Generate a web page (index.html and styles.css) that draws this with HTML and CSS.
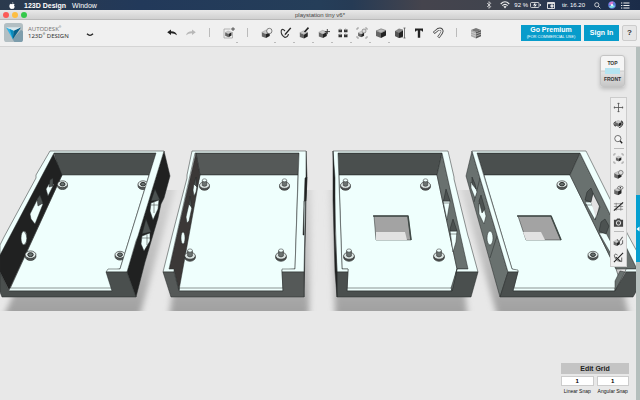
FILE: index.html
```
<!DOCTYPE html>
<html lang="en">
<head>
    <meta charset="UTF-8">
    <meta name="viewport" content="width=device-width, initial-scale=1.0">
    <title>playstation tiny v6*</title>
    <link rel="stylesheet" href="styles.css">
</head>
<body>
    <!-- shared symbols -->
    <svg class="symbols" aria-hidden="true">
        <symbol id="cube" viewBox="0 0 12 12">
            <path d="M1 4.5 6 6.5V11.5L1 9.5Z" fill="#666"/>
            <path d="M6 6.5 10.5 4V9L6 11.5Z" fill="#222"/>
            <path d="M1 4.5 5.5 2.2 10.5 4 6 6.5Z" fill="#ccc" stroke="#777" stroke-width=".4"/>
        </symbol>
        <symbol id="corners" viewBox="0 0 12 12">
            <path d="M1 3V1H3M9 1H11V3M11 9V11H9M3 11H1V9" fill="none" stroke="#888" stroke-width=".8"/>
        </symbol>
        <symbol id="ring" viewBox="0 0 12 10">
            <ellipse cx="6" cy="5.8" rx="5" ry="3.8" fill="#555b5a" stroke="#222" stroke-width=".6"/>
            <ellipse cx="6" cy="4.2" rx="5" ry="3.4" fill="#e4eeec" stroke="#222" stroke-width=".6"/>
            <ellipse cx="6" cy="4.2" rx="2.5" ry="1.8" fill="#687270" stroke="#111" stroke-width=".8"/>
        </symbol>
        <symbol id="screw" viewBox="0 0 12 14">
            <ellipse cx="6" cy="9.6" rx="5" ry="3.7" fill="#4d5251" stroke="#222" stroke-width=".6"/>
            <ellipse cx="6" cy="8.2" rx="5" ry="3.2" fill="#dce6e4" stroke="#222" stroke-width=".6"/>
            <path d="M3.8 3.5V8.5Q6 10.2 8.2 8.5V3.5Z" fill="#6b7371" stroke="#222" stroke-width=".5"/>
            <ellipse cx="6" cy="3.3" rx="2.2" ry="1.5" fill="#f0fffd" stroke="#333" stroke-width=".5"/>
        </symbol>
    </svg>

    <header class="menubar">
        <svg class="apple" viewBox="0 0 14 16"><path d="M10 0Q10 3 7 4Q7 1 10 0ZM7 5Q9 4 10 4Q12 4 13 6Q10 8 13.5 11Q12 16 9.5 16Q7 15 5 16Q2 16 .8 11Q0 5 4 4Q5 4 7 5Z" fill="#fff"/></svg>
        <strong>123D Design</strong>
        <span class="menu-item">Window</span>
        <div class="status">
            <svg class="bluetooth" viewBox="0 0 6 9"><path d="M.8 2.3 5 6.3 3 8.3V.7L5 2.7.8 6.7" fill="none" stroke="#eee" stroke-width=".8"/></svg>
            <svg class="wifi" viewBox="0 0 10 8"><path d="M.7 3Q5-1.5 9.3 3M2.3 4.7Q5 2 7.7 4.7" fill="none" stroke="#eee" stroke-width="1.1"/><path d="M3.4 5.6Q5 4.4 6.6 5.6L5 7.5Z" fill="#eee"/></svg>
            <span class="battery-text">92 %</span>
            <svg class="battery" viewBox="0 0 11 6"><rect x=".5" y=".5" width="8.5" height="5" rx="1" fill="none" stroke="#eee" stroke-width=".8"/><path d="M5.6 0 3 3.4H5L4 6 7 2.6H5Z" fill="#fff"/><path d="M10.3 2V4" stroke="#eee"/></svg>
            <svg class="calendar" viewBox="0 0 8 7"><path d="M.5.5H7.5V6.5H.5Z" fill="none" stroke="#eee" stroke-width=".9"/><path d="M1 1.6H7M4 3H6V5H4Z" fill="#bbb" stroke="#eee"/></svg>
            <span class="clock">tir. 16.20</span>
            <svg class="search" viewBox="0 0 8 8"><circle cx="3.2" cy="3.2" r="2.4" fill="none" stroke="#eee" stroke-width=".9"/><path d="M5 5 7.3 7.3" stroke="#eee"/></svg>
            <svg class="siri" viewBox="0 0 8 8"><circle cx="4" cy="4" r="3.8" fill="#5a7bd8"/><path d="M.7 3.5Q3-.5 5.5 1L4 4Z" fill="#dc77ce"/><path d="M1 5.7 4 3.7 7.2 5Q4 8.8 1 5.7Z" fill="#7fe2e6"/><circle cx="4" cy="4" r="1" fill="#fff"/></svg>
            <svg class="list" viewBox="0 0 9 7"><path d="M0 1H1.3M2.4 1H8.5M0 3.5H1.3M2.4 3.5H8.5M0 6H1.3M2.4 6H8.5" stroke="#eee"/></svg>
        </div>
    </header>

    <div class="titlebar">
        <div class="lights"><i class="red"></i><i class="yellow"></i><i class="green"></i></div>
        <span>playstation tiny v6*</span>
    </div>

    <nav class="toolbar">
        <svg class="logo" viewBox="0 0 20 20">
            <rect width="20" height="20" rx="3" fill="#b3bfc3"/>
            <path d="M9 17 18 7 20 9V17Q20 20 17 20H11Z" fill="#7d9dac"/>
            <path d="M2 4.5 10 8.2 9.3 17Z" fill="#33b4e5"/>
            <path d="M18 4.5 10 8.2 9.3 17Z" fill="#07618a"/>
            <path d="M2 4.5H18L10 8.2Z" fill="#d7e7ed"/>
            <path d="M6 6.3 10 8.2 9.3 17Z" fill="#078bbd"/>
        </svg>
        <div class="brand"><span>AUTODESK<sup>®</sup></span><span class="product">123D<sup>®</sup> DESIGN</span></div>
        <button class="app-menu" aria-label="Application menu"><svg viewBox="0 0 8 4"><path d="M1 .8 Q4 4 7 .8" fill="none" stroke="#222" stroke-width="1.3"/></svg></button>

        <div class="tools">
            <button aria-label="Undo"><svg viewBox="0 0 12 12"><path d="M1.2 5.2 5 2.4V4.3Q10 4.3 11 8.2Q8.3 6.2 5 6.3V8Z" fill="#222"/></svg></button>
            <button aria-label="Redo"><svg viewBox="0 0 12 12"><path d="M10.8 5.2 7 2.4V4.3Q2 4.3 1 8.2Q3.7 6.2 7 6.3V8Z" fill="#b8b8b8"/></svg></button>
            <i class="divider"></i>
            <button class="more" aria-label="Transform"><svg viewBox="0 0 12 12"><path d="M7.5 2H1V11H9.5V5" fill="none" stroke="#999" stroke-width=".7"/><use href="#cube" x="1.5" y="2.5" width="8" height="8"/><path d="M10 .2V4M8 2H12" stroke="#333" stroke-width=".8"/></svg></button>
            <i class="divider"></i>
            <button class="more" aria-label="Primitives"><svg viewBox="0 0 12 12"><use href="#cube" x="0" y="1.5" width="10" height="10"/><circle cx="8.3" cy="4" r="2.7" fill="#eee" stroke="#555" stroke-width=".7"/></svg></button>
            <button class="more" aria-label="Sketch"><svg viewBox="0 0 12 12"><path d="M5 4Q2 .8 1.2 4Q.8 8 5 10.5Q8 10 8.5 7" fill="none" stroke="#333" stroke-width="1.1"/><path d="M11.3 1.2 6 7.5 4.5 8.5 5 6.5 10.2.5Z" fill="#222"/></svg></button>
            <button class="more" aria-label="Construct"><svg viewBox="0 0 12 12"><use href="#cube" x="0" y="2" width="10" height="10"/><path d="M5.5 5 9.5.6" stroke="#222" stroke-width="1.6"/></svg></button>
            <button class="more" aria-label="Modify"><svg viewBox="0 0 12 12"><use href="#cube" x="0" y="1.5" width="10" height="10"/><path d="M9.3 2V7.2M6.8 4.6H12" stroke="#333" stroke-width=".9"/></svg></button>
            <button class="more" aria-label="Pattern"><svg viewBox="0 0 12 12"><path d="M1.5 2.5H5V5.3H1.5ZM7 2.5H10.5V5.3H7ZM1.5 7.3H5V10.3H1.5ZM7 7.3H10.5V10.3H7Z" fill="#333"/><path d="M1.5 2.5 3 1.5 5 2.5 3.3 3.5ZM7 2.5 8.5 1.5 10.5 2.5 8.8 3.5ZM1.5 7.3 3 6.5 5 7.3 3.3 8.3ZM7 7.3 8.5 6.5 10.5 7.3 8.8 8.3Z" fill="#999"/></svg></button>
            <button class="more" aria-label="Grouping"><svg viewBox="0 0 12 12"><use href="#corners" width="12" height="12"/><use href="#cube" x="1.5" y="3" width="7.5" height="7.5"/><circle cx="8" cy="4" r="2" fill="#ddd" stroke="#666" stroke-width=".6"/></svg></button>
            <button class="more" aria-label="Combine"><svg viewBox="0 0 12 12"><path d="M1 4 6 6V11L1 9Z" fill="#666"/><path d="M6 6 11 3.5V8.5L6 11Z" fill="#222"/><path d="M1 4 6 1.8 11 3.5 6 6Z" fill="#bbb" stroke="#555" stroke-width=".5"/></svg></button>
            <button aria-label="Measure"><svg viewBox="0 0 12 12"><path d="M1 4 5 1.5 9 2.5V10.5L5 11 1 9Z" fill="#888"/><path d="M1 4 5 6V11L1 9Z" fill="#555"/><path d="M5 6 9 3.5V9.5L5 11Z" fill="#222"/><path d="M10.5 1V11M9.5 1H11.5M9.5 11H11.5" stroke="#555" stroke-width=".8"/></svg></button>
            <button aria-label="Text"><svg viewBox="0 0 12 12"><path d="M2 1.5H10V4.4H9.2L8.4 3.5H7.2V10.8H4.8V3.5H3.6L2.8 4.4H2Z" fill="#222"/></svg></button>
            <button aria-label="Snap"><svg viewBox="0 0 12 12"><path d="M1.8 6 6 2.4Q9.5 1 10.2 4Q10.5 5.5 6.3 10.3" fill="none" stroke="#444" stroke-width="2.8"/><path d="M2.3 5.6 6 2.6Q9.3 1.5 10 4Q10 5.5 6.6 10" fill="none" stroke="#eee" stroke-width="1.3"/></svg></button>
            <i class="divider"></i>
            <button aria-label="Material"><svg viewBox="0 0 12 12"><path d="M1 3V9.3L6 11.5V5Z" fill="#aaa"/><path d="M11 3V9.3L6 11.5V5Z" fill="#555"/><path d="M1 3 6 1 11 3 6 5Z" fill="#777"/><path d="M1 5 6 7 11 5M1 7.2 6 9.2 11 7.2" fill="none" stroke="#ddd" stroke-width=".6"/></svg></button>
        </div>

        <div class="account">
            <button class="blue premium">Go Premium<small>(FOR COMMERCIAL USE)</small></button>
            <button class="blue">Sign In</button>
            <button class="help">?</button>
        </div>
    </nav>

    <main class="workspace">
        <svg class="scene" viewBox="0 47 640 353" preserveAspectRatio="xMidYMid slice" role="img" aria-label="Four open enclosures">
            <defs>
                <filter id="soft" x="-10%" y="-10%" width="120%" height="120%"><feGaussianBlur stdDeviation="3 .7"/></filter>
                <linearGradient id="fade" x1="0" y1="0" x2="0" y2="1"><stop offset="0" stop-color="#d3d3d3"/><stop offset=".6" stop-color="#bcbcbc"/><stop offset="1" stop-color="#a1a1a1"/></linearGradient>
            </defs>

            <!-- shadows -->
            <g filter="url(#soft)" fill="url(#fade)">
                <path d="M60 190H175L141 311H6Z"/>
                <path d="M185 190H311L309 311H170Z"/>
                <path d="M330 190H455L467 311H335Z"/>
                <path d="M461 190H600L628 311H496Z"/>
            </g>

            <!-- box 1 -->
            <g class="part">
                <path class="black" d="M164 151 170 176 164 198 161 204 158 218 145 262 136 297 127 272Z"/>
                <path class="face" d="M54 153H157L149 176H61Z"/>
                <path class="floor" d="M62 175H149L120 269 107 271 113 291H9Z"/>
                <path class="floor" d="M9 288H112L113 291H9"/>
                <path class="black" d="M53 153 62 175 9 290 0 272V250Z"/>
                <path class="floor" d="M46 189 49 184 54 184 48 196Z"/>
                <path class="hole" d="M50 180 53 178V186L49 187Z"/>
                <path class="floor" d="M30 214 37 200 43 204 35 224 31 219Z"/>
                <path class="hole" d="M37 199 40 195 43 203 38 206Z"/>
                <ellipse class="floor" cx="24" cy="238" rx="3" ry="7"/>
                <path class="edge" d="M24 231Q30 239 24 245"/>
                <use href="#ring" x="56" y="180" width="13" height="10"/>
                <use href="#ring" x="137" y="180" width="12" height="10"/>
                <use href="#ring" x="24" y="250" width="13" height="11"/>
                <use href="#ring" x="114" y="250" width="12" height="11"/>
                <path class="rim" d="M50 151H164L138 236 136 241 127 272H106L108 269H120L156 153H54L0 255V245L4 237 36 178V175Z"/>
                <path class="face" d="M0 272 9 291H112L106 272H127L136 297H2L0 292Z"/>
                <path class="hole" d="M155 189 160 200 151 201ZM146 219 151 232 142 234Z"/>
                <path class="floor" d="M151 203 159 200 158 209 153 220 150 211Z"/>
                <path class="floor" d="M142 236 150 233V241L144 251 141 244Z"/>
                <path class="edge" d="M151 205H158M142 238H150M154 202V213M147 235V245"/>
            </g>

            <!-- box 2 -->
            <g class="part">
                <path class="black" d="M306 151 307 176 306 201 304 297 302 272Z"/>
                <path class="face light" d="M196 153H299L298 175H200Z"/>
                <path class="floor" d="M200 175H298L295 269 282 270 283 291H179L174 270Z"/>
                <path class="floor" d="M179 288H283V291H179Z"/>
                <path class="brown" d="M196 153 200 175 179 290 174 270H169Z"/>
                <path class="floor" d="M193 190 194 184 197 186 196 192 194 196Z"/>
                <path class="hole" d="M194 184 196 177 197 187Z"/>
                <path class="floor" d="M186 217 189 204 192 207 189 221 187 223Z"/>
                <path class="hole" d="M189 204 190 196 192 208Z"/>
                <ellipse class="floor" cx="183" cy="238" rx="2" ry="6"/>
                <use href="#screw" x="198" y="177" width="13" height="14"/>
                <use href="#screw" x="278" y="177" width="13" height="14"/>
                <use href="#screw" x="183" y="247" width="14" height="15"/>
                <use href="#screw" x="274" y="247" width="14" height="15"/>
                <path class="rim" d="M192 151H306V176L304 272H282V269H295L299 153H195L169 269H174V272H163L172 236 187 178V175Z"/>
                <path class="face light" d="M163 272H174L179 291H283L282 272H304V297H171Z"/>
                <path class="black" d="M305 178 307 177 306 201H304V235H303Z"/>
            </g>

            <!-- box 3 -->
            <g class="part">
                <path class="face" d="M338 153H442L437 175H339Z"/>
                <path class="floor" d="M339 175H437L457 269 452 291H347L348 269H342Z"/>
                <path class="floor" d="M347 288H452L451 291H347Z"/>
                <path class="gray" d="M442 153 469 269H457L437 175Z"/>
                <path class="floor" d="M443 201H450L448 213 447 220Z"/>
                <path class="hole" d="M444 199 446 189 450 201H443Z"/>
                <path class="floor" d="M450 231H457L456 242 453 252Z"/>
                <path class="hole" d="M450 229 453 219 457 231H450Z"/>
                <path class="edge" d="M443 203H449M450 234H457"/>
                <path class="cut" d="M374 216H408L411 240H376Z"/>
                <path class="cut-light" d="M376 232H405L407 240H376Z"/>
                <path class="thick" d="M373 216H408L411 240"/>
                <use href="#screw" x="339" y="177" width="13" height="14"/>
                <use href="#screw" x="419" y="177" width="13" height="14"/>
                <use href="#screw" x="342" y="247" width="14" height="15"/>
                <use href="#screw" x="432" y="247" width="14" height="15"/>
                <path class="rim" d="M333 151H448L454 177V179L468 236 469 239 478 272H456L457 269H468L442 153H338L342 269H348V272H337Z"/>
                <path class="face" d="M337 272H348L347 291H452L456 272H478L471 297H337Z"/>
                <path class="gray" d="M457 269 456 275 452 291 451 288Z"/>
                <path class="black" d="M333 151 335 178V234L337 272V297L335 272 333 200Z"/>
            </g>

            <!-- box 4 -->
            <g class="part">
                <path class="gray" d="M472 151 466 176 500 297 508 272Z"/>
                <path class="edge" d="M497 236 490 258M480 178 474 202"/>
                <path class="face" d="M477 153H580L570 175H484Z"/>
                <path class="floor" d="M484 175H570L616 269 619 278 615 291H513L518 271 512 269Z"/>
                <path class="floor" d="M513 288H615V291H513Z"/>
                <path class="gray" d="M580 153 637 269H616L570 175Z"/>
                <path class="floor" d="M585 202H591L597 214 595 220Z"/>
                <path class="cut-light" d="M591 202 593 194 599 206 596 218Z"/>
                <path class="hole" d="M585 200 587 192 591 188 593 193 591 202Z"/>
                <path class="edge" d="M593 193 600 207 595 220M585 205H592"/>
                <path class="floor" d="M599 233H606L614 248 611 254Z"/>
                <path class="hole" d="M599 231 601 222 605 219 609 226 606 234Z"/>
                <path class="cut" d="M518 216H551L561 240H526Z"/>
                <path class="cut-light" d="M523 232H541L545 240H526Z"/>
                <path class="thick" d="M517 216H551L561 240"/>
                <use href="#ring" x="556" y="180" width="12" height="10"/>
                <use href="#ring" x="587" y="250" width="12" height="11"/>
                <path class="rim" d="M472 151H586L598 175 600 179 628 235 640 257V272H625L626 269H637L580 153H477L512 269 518 270V272H508Z"/>
                <path class="gray" d="M625 272 615 291V281L620 271Z"/>
                <path class="floor" d="M471 182 475 186 477 192 475 198 471 188Z"/>
                <path class="hole" d="M472 177 475 184 476 189 472 184Z"/>
                <path class="floor" d="M479 203 484 208 486 216 484 224 479 214Z"/>
                <path class="hole" d="M479 201 481 195 485 209 482 213Z"/>
                <ellipse class="floor" cx="490" cy="238" rx="3" ry="7"/>
                <path class="face" d="M508 272H518L513 291H615L626 272H640V285L633 297H500Z"/>
            </g>
        </svg>

        <div class="view-cube">
            <button>TOP</button>
            <i></i>
            <button>FRONT</button>
        </div>

        <div class="palette">
            <button aria-label="Pan"><svg viewBox="0 0 12 12"><path d="M6 1V11M1 6H11M5 2.2 6 1 7 2.2M5 9.8 6 11 7 9.8M2.2 5 1 6 2.2 7M9.8 5 11 6 9.8 7" fill="none" stroke="#555" stroke-width=".9"/></svg></button>
            <button aria-label="Orbit"><svg viewBox="0 0 12 12"><use href="#cube" x="1.5" y="1" width="9" height="9"/><path d="M3 9Q-1 6 3 4M9 3Q13 6 8 10L6.5 10.5" fill="none" stroke="#333" stroke-width="1.1"/></svg></button>
            <button aria-label="Zoom"><svg viewBox="0 0 12 12"><circle cx="5.3" cy="5" r="3.4" fill="#f5f5f5" stroke="#555" stroke-width=".9"/><path d="M7.8 7.5 10 10" stroke="#222" stroke-width="1.6"/></svg></button>
            <hr>
            <button aria-label="Fit"><svg viewBox="0 0 12 12"><use href="#corners" width="12" height="12"/><use href="#cube" x="2.5" y="2" width="7.5" height="7.5"/></svg></button>
            <button aria-label="Shading"><svg viewBox="0 0 12 12"><use href="#cube" x=".5" y="1" width="10" height="10"/><circle cx="8.5" cy="4" r="2.5" fill="#ddd" stroke="#555" stroke-width=".7"/></svg></button>
            <button aria-label="Visibility"><svg viewBox="0 0 12 12"><use href="#cube" x=".5" y="1.5" width="10" height="10"/><ellipse cx="8" cy="3" rx="3" ry="1.8" fill="#eee" stroke="#444" stroke-width=".7"/><circle cx="8" cy="3" r=".8" fill="#222"/></svg></button>
            <button aria-label="Grid visibility"><svg viewBox="0 0 12 12"><path d="M1 3H11M1 6H11M1 9H11M3.5 2V10.5M8.5 2V10.5" stroke="#777" stroke-width=".8"/><path d="M1 10.5 11 1.5" stroke="#222" stroke-width="1.2"/></svg></button>
            <button aria-label="Screenshot"><svg viewBox="0 0 12 12"><path d="M1 3H3.5L4.5 1.5H7.5L8.5 3H11V10.5H1Z" fill="#444"/><circle cx="6" cy="6.5" r="2.4" fill="#555" stroke="#eee"/></svg></button>
            <hr>
            <button aria-label="Snapping"><svg viewBox="0 0 12 12"><use href="#cube" x="0" y="2.5" width="8.5" height="9"/><path d="M10.5 1 6.5 6.5 4.5 3.5M8 10 10.5 8V4.5" fill="none" stroke="#666" stroke-width="1.1"/></svg></button>
            <button aria-label="Sketch visibility"><svg viewBox="0 0 12 12"><path d="M5 3.5Q2 1 1.5 4Q2 8 5 9.5L9.5 10.5V6" fill="none" stroke="#555" stroke-width="1"/><path d="M1 11 11 1M3 5.5 8 10" stroke="#222" stroke-width="1.2"/></svg></button>
        </div>

        <div class="grid-panel">
            <button class="edit-grid">Edit Grid</button>
            <div class="snap">
                <input type="text" id="linear" value="1">
                <label for="linear">Linear Snap</label>
            </div>
            <div class="snap">
                <input type="text" id="angular" value="1">
                <label for="angular">Angular Snap</label>
            </div>
        </div>

        <aside class="drawer"><button aria-label="Open parts library"><svg viewBox="0 0 4 6"><path d="M3.5.5V5.5L.5 3Z" fill="#fff"/></svg></button></aside>
    </main>
</body>
</html>
```

FILE: styles.css
```
* {
    box-sizing: border-box;
}
body {
    display: flex;
    flex-direction: column;
    height: 100vh;
    margin: 0;
    overflow: hidden;
    font-family: "Liberation Sans", Arial, sans-serif;
    font-size: 7px;
    color: #333;
    background-color: #e8e8e8;
}
button {
    padding: 0;
    border: none;
    background: none;
    font-family: inherit;
    color: inherit;
    cursor: pointer;
}
svg {
    display: block;
    flex: none;
}
.symbols {
    position: absolute;
    width: 0;
    height: 0;
}

/* system menu bar */
.menubar {
    display: flex;
    align-items: center;
    flex: none;
    height: 10px;
    padding: 0 10px 0 9px;
    color: #fff;
    background: linear-gradient(to right, #2b3a4d, #22395a 22%, #253e59 50%, #263b55 55%, #45444d 66%, #40444e 78%, #243450 87%, #1b2c49);
}
.apple {
    width: 6px;
    height: 7px;
    margin-right: 9px;
}
.menu-item {
    margin-left: 6px;
}
.status {
    display: flex;
    align-items: center;
    margin-left: auto;
}
.bluetooth {
    width: 6px;
    height: 8px;
    margin-right: 8px;
}
.wifi {
    width: 10px;
    height: 8px;
    margin-right: 4px;
}
.battery-text {
    font-size: 6px;
}
.battery {
    width: 11px;
    height: 6px;
    margin: 0 6px 0 2px;
}
.calendar {
    width: 8px;
    height: 7px;
    margin-right: 7px;
}
.clock {
    font-size: 6px;
}
.search {
    width: 7px;
    height: 7px;
    margin: 0 7px 0 9px;
}
.siri {
    width: 8px;
    height: 8px;
    margin-right: 5px;
}
.list {
    width: 9px;
    height: 7px;
}

/* window title */
.titlebar {
    display: flex;
    align-items: center;
    justify-content: center;
    position: relative;
    flex: none;
    height: 10px;
    border-bottom: 1px solid #b9b9b9;
    background: linear-gradient(#e8e8e8, #d0d0d0);
    font-size: 6px;
    color: #444;
}
.lights {
    display: flex;
    gap: 3px;
    position: absolute;
    left: 3px;
}
.lights i {
    width: 6px;
    height: 6px;
    border-radius: 50%;
}
.red {
    background-color: #fc5b57;
}
.yellow {
    background-color: #fdbe41;
}
.green {
    background-color: #35c84b;
}

/* toolbar */
.toolbar {
    display: flex;
    align-items: center;
    flex: none;
    height: 27px;
    padding: 0 3px 1px 4px;
    border-bottom: 1px solid #d4d4d4;
    background-color: #f0f0f0;
}
.logo {
    width: 19px;
    height: 19px;
}
.brand {
    display: flex;
    flex-direction: column;
    width: 58px;
    margin-left: 5px;
    font-family: "Noto Sans", "Open Sans", sans-serif;
    font-size: 6px;
    line-height: 7px;
    color: #777;
    white-space: nowrap;
}
.brand sup {
    font-size: 3px;
    line-height: 0;
}
.brand .product {
    color: #333;
}
.app-menu svg {
    width: 8px;
    height: 4px;
}
.app-menu {
    margin: 4px 68px 0 0;
}
.tools {
    display: flex;
    align-items: center;
}
.tools button,
.tools .divider {
    display: flex;
    justify-content: center;
    width: 19px;
}
.tools svg {
    width: 12px;
    height: 12px;
}
.divider::before {
    content: "";
    width: 1px;
    height: 9px;
    background-color: #bbb;
}
.more {
    position: relative;
}
.more::after {
    content: "";
    position: absolute;
    right: 0;
    bottom: -4px;
    width: 2px;
    height: 1px;
    background-color: #bbb;
}
.account {
    display: flex;
    gap: 3px;
    margin-left: auto;
}
.account button {
    height: 16px;
}
.blue {
    width: 35px;
    background-color: #079ccb;
    color: #fff;
    font-size: 7px;
    font-weight: bold;
}
.premium {
    display: flex;
    flex-direction: column;
    align-items: center;
    justify-content: center;
    width: 60px;
    line-height: 8px;
}
.premium small {
    font-size: 4px;
    font-weight: normal;
    line-height: 5px;
    white-space: nowrap;
}
.account .help {
    width: 15px;
    border: 1px solid #ccc;
    border-radius: 2px;
    background-color: #e6e6e6;
    font-size: 8px;
    font-weight: bold;
}

/* 3d view */
.workspace {
    position: relative;
    flex: 1;
    min-height: 0;
}
.scene {
    width: 100%;
    height: 100%;
}
.part path,
.part ellipse {
    stroke: #252928;
    stroke-width: .5;
    stroke-linejoin: round;
}
.part .floor,
.part .rim {
    fill: #effffd;
}
.part .face {
    fill: #4a4f4e;
}
.part .light {
    fill: #555958;
}
.part .gray {
    fill: #69716f;
}
.part .brown {
    fill: #3b3837;
}
.part .black {
    fill: #202121;
}
.part .hole {
    fill: #4c5251;
}
.part .cut {
    fill: #a3a3a3;
}
.part .cut-light {
    fill: #e2e2e2;
    stroke: none;
}
.part .edge {
    fill: none;
}
.part .thick {
    fill: none;
    stroke: #414a47;
    stroke-width: 1.6;
}

/* things over the view */
.view-cube {
    display: flex;
    flex-direction: column;
    align-items: center;
    justify-content: space-between;
    position: absolute;
    top: 8px;
    right: 15px;
    width: 25px;
    height: 32px;
    padding: 4px 0;
    border: 1px solid #c4c4c4;
    border-radius: 3px;
    background: linear-gradient(#f5f5f5 48%, #bbb 49%, #e3e3e3 53%, #c7c7c7);
    box-shadow: 0 2px 4px rgba(0, 0, 0, 0.2);
}
.view-cube button {
    font-size: 5px;
    font-weight: bold;
    line-height: 6px;
}
.view-cube i {
    width: 15px;
    height: 6px;
    background-color: #b5e4f1;
}
.palette {
    display: flex;
    flex-direction: column;
    align-items: center;
    position: absolute;
    top: 50px;
    right: 13px;
    width: 17px;
    padding: 1px 0;
    border: 1px solid #ccc;
    background-color: #efefef;
}
.palette button {
    display: flex;
    align-items: center;
    height: 16px;
}
.palette svg {
    width: 11px;
    height: 11px;
}
.palette hr {
    width: 10px;
    margin: 1px 0;
    border: none;
    border-top: 1px solid #bbb;
}
.grid-panel {
    display: grid;
    grid-template-columns: 1fr 1fr;
    gap: 2px 3px;
    position: absolute;
    right: 11px;
    bottom: 6px;
    width: 68px;
}
.edit-grid {
    grid-column: 1 / 3;
    height: 11px;
    background-color: #c4c4c4;
    font-size: 7px;
    font-weight: bold;
    color: #222;
}
.snap {
    display: flex;
    flex-direction: column;
    align-items: center;
    gap: 2px;
}
.snap input {
    width: 100%;
    height: 10px;
    padding: 0;
    border: 1px solid #ccc;
    background-color: #fff;
    font-family: inherit;
    font-size: 6px;
    font-weight: bold;
    text-align: center;
}
.snap label {
    font-size: 5px;
    line-height: 6px;
    color: #111;
    white-space: nowrap;
}
.drawer {
    display: flex;
    align-items: center;
    position: absolute;
    top: 0;
    right: 0;
    bottom: 0;
    width: 4px;
    padding-top: 10px;
    background-color: #b5bfbd;
}
.drawer button {
    display: flex;
    align-items: center;
    width: 4px;
    height: 67px;
    background-color: #059fd0;
}
.drawer svg {
    width: 4px;
    height: 6px;
}
```
